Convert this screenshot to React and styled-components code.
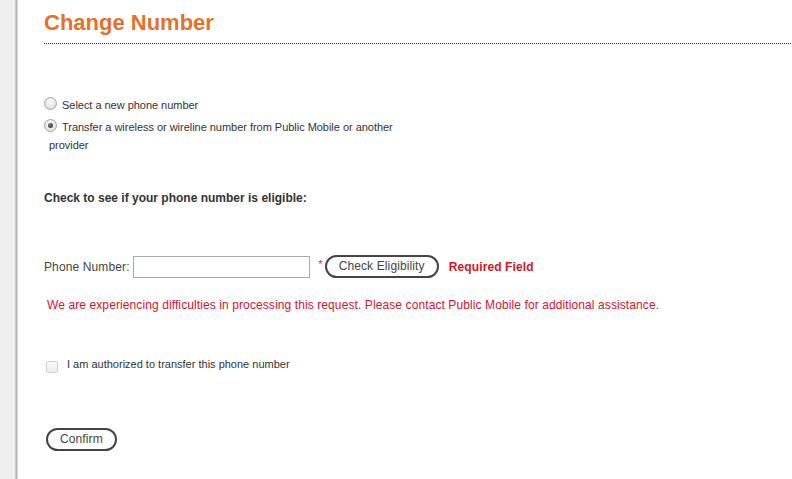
import React from "react";
import styled, { createGlobalStyle } from "styled-components";

const Global = createGlobalStyle`
  html, body { margin: 0; padding: 0; background: #fff; }
  body { font-family: "Liberation Sans", Arial, sans-serif; color: #333; }
`;

const Page = styled.div`
  display: flex;
  min-height: 479px;
  width: 792px;
`;

const Side = styled.div`
  flex: 0 0 18px;
  background: linear-gradient(to right, #efefef 0, #efefef 15px, #d2d2d2 15px, #b4b4b4 16.5px, #c8c8c8 17px, #e6e6e6 18px);
`;

const Main = styled.main`
  flex: 1;
  padding: 10px 0 0 26px;
`;

const Title = styled.h1`
  margin: 0;
  font-size: 22px;
  line-height: 26px;
  font-weight: bold;
  color: #e5722c;
  padding-bottom: 7px;
  border-bottom: 1px dotted #333;
  margin-right: 1px;
`;

const Options = styled.div`
  margin-top: 52px;
`;

const Option = styled.label`
  display: block;
  width: 376px;
  box-sizing: border-box;
  padding-left: 5px;
  font-size: 11px;
  line-height: 18px;
  color: #333;
  letter-spacing: -0.03px;
  & + & { margin-top: 4px; }
`;

const Radio = styled.span`
  display: inline-block;
  width: 11px;
  height: 11px;
  border-radius: 50%;
  border: 1px solid #a6a6a6;
  background: radial-gradient(circle at 50% 35%, #fbfbfb 0, #e6e6e6 60%, #d2d2d2 100%);
  margin-left: -5px;
  margin-right: 5px;
  vertical-align: -1px;
  position: relative;
  &::after {
    content: "";
    display: ${(p) => (p.checked ? "block" : "none")};
    position: absolute;
    left: 3px;
    top: 3px;
    width: 5px;
    height: 5px;
    border-radius: 50%;
    background: radial-gradient(circle at 40% 40%, #777 0, #333 100%);
  }
`;

const Heading = styled.div`
  margin-top: 37px;
  font-size: 12px;
  line-height: 14px;
  font-weight: bold;
  color: #333;
`;

const PhoneRow = styled.div`
  margin-top: 50px;
  display: flex;
  align-items: center;
  font-size: 12px;
  color: #444;
  letter-spacing: 0.12px;
`;

const Label = styled.span`
  margin-right: 3px;
`;

const Input = styled.input`
  box-sizing: border-box;
  width: 177px;
  height: 22px;
  border: 1px solid #a9a9a9;
  padding: 0 3px;
  margin: 0;
  font: inherit;
`;

const Star = styled.span`
  color: #e0112b;
  font-size: 10px;
  margin: -4px 2px 0 9px;
`;

const PillButton = styled.button`
  box-sizing: border-box;
  height: 23px;
  padding: 0 12px;
  border: 2px solid #444;
  border-radius: 12px;
  background: #fff;
  color: #444;
  font-family: "Liberation Sans", Arial, sans-serif;
  font-size: 12px;
  letter-spacing: 0.12px;
  line-height: 19px;
  cursor: pointer;
`;

const Required = styled.span`
  margin-left: 10px;
  color: #d8141e;
  font-weight: bold;
`;

const ErrorText = styled.div`
  margin: 20px 0 0 3px;
  font-size: 12px;
  line-height: 14px;
  letter-spacing: 0.1px;
  color: #e0112b;
`;

const CheckRow = styled.label`
  margin: 45px 0 0 2px;
  display: flex;
  align-items: flex-start;
  font-size: 11px;
  line-height: 14px;
  color: #333;
`;

const Box = styled.span`
  box-sizing: border-box;
  width: 12px;
  height: 12px;
  margin-top: 4px;
  margin-right: 9px;
  border: 1px solid #cfcfcf;
  border-radius: 2px;
  background: linear-gradient(#fafafa, #ececec);
`;

const Actions = styled.div`
  margin: 55px 0 0 2px;
`;

export default function App() {
  return (
    <>
      <Global />
      <Page>
        <Side />
        <Main>
          <Title>Change Number</Title>
          <Options>
            <Option>
              <Radio />
              Select a new phone number
            </Option>
            <Option>
              <Radio checked />
              Transfer a wireless or wireline number from Public Mobile or another provider
            </Option>
          </Options>
          <Heading>Check to see if your phone number is eligible:</Heading>
          <PhoneRow>
            <Label>Phone Number:</Label>
            <Input type="text" />
            <Star>*</Star>
            <PillButton>Check Eligibility</PillButton>
            <Required>Required Field</Required>
          </PhoneRow>
          <ErrorText>
            We are experiencing difficulties in processing this request. Please contact Public Mobile for additional assistance.
          </ErrorText>
          <CheckRow>
            <Box />
            I am authorized to transfer this phone number
          </CheckRow>
          <Actions>
            <PillButton>Confirm</PillButton>
          </Actions>
        </Main>
      </Page>
    </>
  );
}
